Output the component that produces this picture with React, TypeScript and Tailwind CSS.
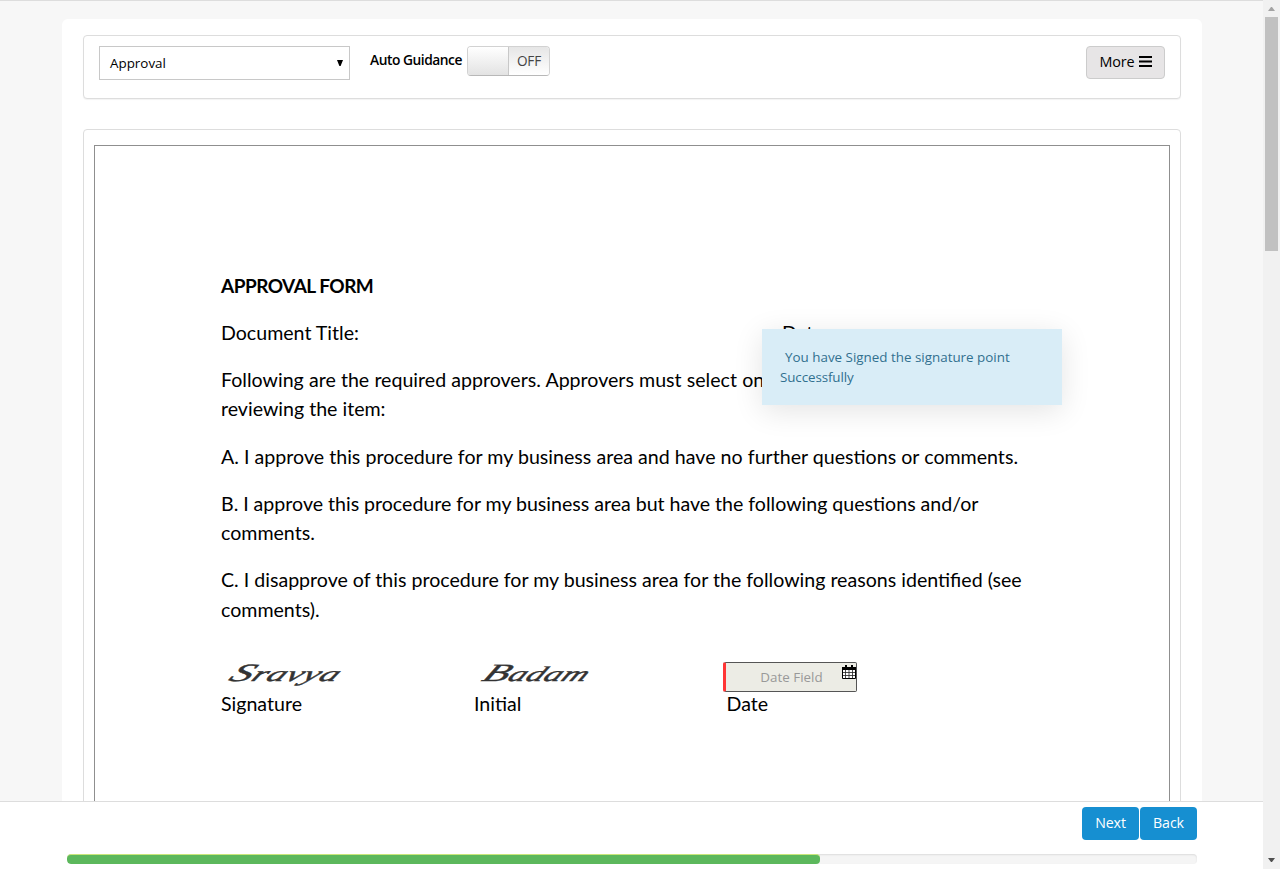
import React from "react";

const ui = "font-['Open_Sans','Noto_Sans',sans-serif]";

function Toolbar() {
  return (
    <div className="flex h-16 items-start rounded border border-[#ddd] bg-white pl-[15px] pr-[15px] pt-[10px] shadow-[0_1px_1px_rgba(0,0,0,0.05)]">
      <button className="flex h-[34px] w-[251px] items-center justify-between border border-[#c8c8c8] pl-[10px] pr-[6px] text-[13.4px]">
        <span className="pt-px">Approval</span>
        <svg width="6" height="6" viewBox="0 0 6 6">
          <path d="M0 0H6L3.6 6H2.4Z" fill="#000" />
        </svg>
      </button>
      <span className="ml-5 w-[97px] whitespace-nowrap pt-1 text-[13.8px] font-semibold leading-5 tracking-[-0.48px]">
        Auto Guidance
      </span>
      <div className="flex h-[30px] w-[83px] overflow-hidden rounded border border-[#d2d2d2] border-b-[#b8b8b8]">
        <div className="h-full w-[40px] bg-linear-to-b from-white to-[#e3e3e3]" />
        <div className="flex h-full flex-1 items-center justify-center border-l border-[#c8c8c8] bg-linear-to-b from-[#e6e6e6] to-white text-[13.6px] tracking-[-0.2px] text-[#444]">
          OFF
        </div>
      </div>
      <button className="ml-auto flex h-[33px] w-[79px] items-center justify-center gap-1 rounded border border-[#ccc] bg-[#e7e5e6] pb-0.5 text-[14.4px] tracking-[-0.1px]">
        More
        <svg width="13" height="11" viewBox="0 0 13 11">
          <path d="M0 0H13V2H0ZM0 4.5H13V6.5H0ZM0 9H13V11H0Z" fill="#000" />
        </svg>
      </button>
    </div>
  );
}

function Doc() {
  return (
    <div className="h-[720px] border border-[#8f8f8f] pl-[126px] pt-[124.6px] font-[Lato,Carlito,sans-serif] text-[19.6px] leading-[29.43px] text-black">
      <p className="mb-[17.75px] whitespace-nowrap text-[19px] font-bold tracking-[-0.52px]">APPROVAL FORM</p>
      <div className="mb-[17.75px] flex whitespace-nowrap">
        <p className="w-[561px]">Document Title:</p>
        <p>Date:</p>
      </div>
      <div className="mb-[17.7px] whitespace-nowrap">
        <p className="[word-spacing:0.15px]">Following are the required approvers. Approvers must select one</p>
        <p>reviewing the item:</p>
      </div>
      <p className="mb-[17.7px] whitespace-nowrap [word-spacing:0.1px]">
        A. I approve this procedure for my business area and have no further questions or comments.
      </p>
      <div className="mb-[17.7px] whitespace-nowrap">
        <p className="[word-spacing:-0.1px]">
          B. I approve this procedure for my business area but have the following questions and/or
        </p>
        <p>comments.</p>
      </div>
      <div className="whitespace-nowrap">
        <p>C. I disapprove of this procedure for my business area for the following reasons identified (see</p>
        <p>comments).</p>
      </div>
      <div className="mt-[37.6px] flex">
        <div className="w-[253px]">
          <div className="h-[27px] pl-[11px]">
            <span className="relative -top-[3px] inline-block origin-left -skew-x-[20deg] scale-x-[1.77] font-['Liberation_Serif',serif] text-[21px] italic leading-[25px] tracking-[0.2px] text-[#333] first-letter:text-[25px] [-webkit-text-stroke:0.4px_#333]">
              Sravya
            </span>
          </div>
          <p>Signature</p>
        </div>
        <div className="w-[249px]">
          <div className="h-[27px] pl-[11px]">
            <span className="relative -top-[3px] inline-block origin-left -skew-x-[20deg] scale-x-[1.66] font-['Liberation_Serif',serif] text-[21px] italic leading-[25px] tracking-[0.2px] text-[#333] first-letter:text-[25px] [-webkit-text-stroke:0.4px_#333]">
              Badam
            </span>
          </div>
          <p>Initial</p>
        </div>
        <div>
          <div className="flex h-[30px] w-[134px] rounded-[2px] border border-l-[3px] border-[#555] border-l-[#ff3535] bg-[#ecece5] font-['Open_Sans','Noto_Sans',sans-serif] text-[13.4px] text-[#999]">
            <span className="flex-1 pl-[15px] text-center leading-[29px]">Date Field</span>
            <svg className="mt-[2px]" width="14" height="15" viewBox="0 0 14 15">
              <path d="M.5 3.5H13.5V13.5H.5Z" fill="#fff" stroke="#000" />
              <path d="M1 7.5H13M1 10.5H13M3.5 5V13M7 5V13M10.5 5V13" fill="none" stroke="#222" strokeWidth="0.8" />
              <path d="M0 2H14V5H0ZM3 0H5V3H3ZM9 0H11V3H9Z" fill="#000" />
            </svg>
          </div>
          <p className="-mt-[3px] pl-[3.5px]">Date</p>
        </div>
      </div>
    </div>
  );
}

export default function App() {
  return (
    <div className={`relative flex h-[869px] w-[1280px] overflow-hidden bg-white text-black ${ui}`}>
      <div className="flex w-[1263px] flex-col">
        <div className="h-[801px] overflow-hidden border-t border-[#ddd] bg-[#f7f7f7] pl-[62px] pt-[18px]">
          <div className="h-[850px] w-[1140px] rounded-md bg-white px-[21px] pt-4">
            <Toolbar />
            <div className="mt-[30px] h-[760px] rounded border border-[#ddd] px-[10px] pt-[15px]">
              <Doc />
            </div>
          </div>
        </div>
        <div className="h-[68px] border-t border-[#ddd] bg-white pl-[67px] pr-[66px] pt-[5px]">
          <div className="flex justify-end gap-px text-[14.2px] tracking-[-0.1px] text-white">
            <button className="h-[33px] w-[57px] rounded bg-[#168fd1] pb-px">Next</button>
            <button className="h-[33px] w-[57px] rounded bg-[#168fd1] pb-px">Back</button>
          </div>
          <div className="mt-[14px] h-[10px] overflow-hidden rounded bg-[#f5f5f5] shadow-[inset_0_1px_2px_rgba(0,0,0,0.1)]">
            <div className="h-full w-[753px] rounded border-t border-[#c9e67a] bg-[#5cb85c]" />
          </div>
        </div>
      </div>
      <div className="flex w-[17px] flex-col items-center justify-between bg-[#f1f1f1]">
        <div className="flex flex-col items-center">
          <svg className="mt-[7px]" width="7" height="4" viewBox="0 0 7 4">
            <path d="M3 0H4L7 4H0Z" fill="#a3a3a3" />
          </svg>
          <div className="mt-[6px] h-[234px] w-[13px] bg-[#c1c1c1]" />
        </div>
        <svg className="mb-[7px]" width="7" height="4" viewBox="0 0 7 4">
          <path d="M0 0H7L4 4H3Z" fill="#505050" />
        </svg>
      </div>
      <div className="absolute left-[762px] top-[329px] h-[76px] w-[300px] bg-[#d9edf7] pl-[18px] pt-[18px] text-[13.4px] leading-5 text-[#31708f] shadow-[0_6px_30px_rgba(0,0,0,0.11)]">
        <p className="whitespace-nowrap pl-[5px]">You have Signed the signature point</p>
        <p className="tracking-[-0.1px]">Successfully</p>
      </div>
    </div>
  );
}
